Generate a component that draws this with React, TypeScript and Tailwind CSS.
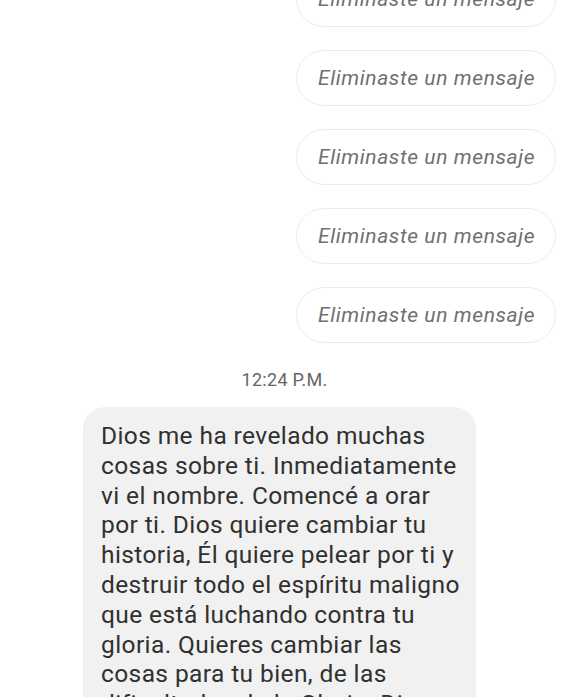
import React from 'react';

const deleted = Array.from({ length: 5 });

const lines = [
  'Dios me ha revelado muchas',
  'cosas sobre ti. Inmediatamente',
  'vi el nombre. Comencé a orar',
  'por ti. Dios quiere cambiar tu',
  'historia, Él quiere pelear por ti y',
  'destruir todo el espíritu maligno',
  'que está luchando contra tu',
  'gloria. Quieres cambiar las',
  'cosas para tu bien, de las',
  'dificultades de la Gloria. Dios',
];

const App: React.FC = () => {
  return (
    <div className="h-[697px] w-[569px] overflow-hidden bg-white font-['Roboto',sans-serif]">
      <div className="-mt-[29px] flex flex-col items-end gap-[23px] pr-[13px]">
        {deleted.map((_, i) => (
          <div
            key={i}
            className="flex h-[56px] w-[260px] items-center rounded-full border border-[#ececec] pl-[21px] pt-[2px] text-[21px] italic tracking-[0.6px] text-[#707070]"
          >
            Eliminaste un mensaje
          </div>
        ))}
      </div>

      <div className="mt-[23px] text-center text-[18px] tracking-[0.3px] text-[#666]">12:24 P.M.</div>

      <div className="ml-[83px] mt-[14px] w-[393px] rounded-[22px] bg-[#f1f1f1] pl-[18px] pt-[14px] pb-[14px] text-[24.5px] leading-[29.8px] tracking-[0.4px] text-[#303030]">
        {lines.map((l, i) => (
          <div key={i} className="whitespace-nowrap">
            {l}
          </div>
        ))}
      </div>
    </div>
  );
};

export default App;
